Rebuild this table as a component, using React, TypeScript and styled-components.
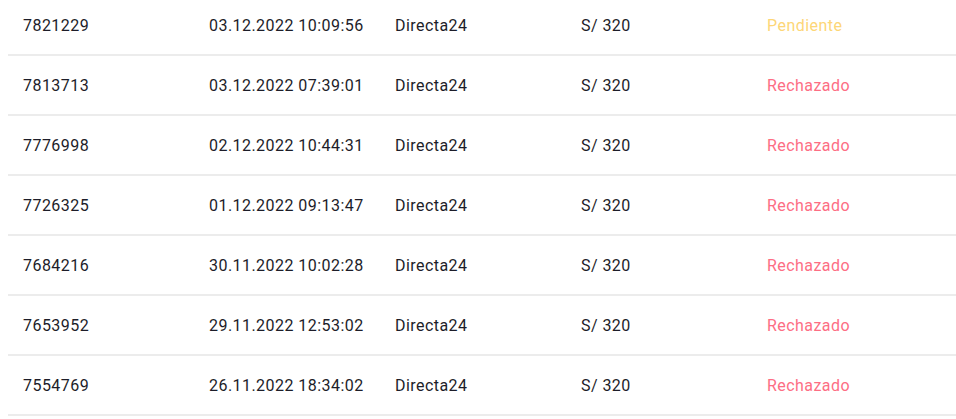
import React from 'react';
import styled, { createGlobalStyle } from 'styled-components';

type Status = 'Pendiente' | 'Rechazado';

const rows: { id: string; date: string; method: string; amount: string; status: Status }[] = [
  { id: '7821229', date: '03.12.2022 10:09:56', method: 'Directa24', amount: 'S/ 320', status: 'Pendiente' },
  { id: '7813713', date: '03.12.2022 07:39:01', method: 'Directa24', amount: 'S/ 320', status: 'Rechazado' },
  { id: '7776998', date: '02.12.2022 10:44:31', method: 'Directa24', amount: 'S/ 320', status: 'Rechazado' },
  { id: '7726325', date: '01.12.2022 09:13:47', method: 'Directa24', amount: 'S/ 320', status: 'Rechazado' },
  { id: '7684216', date: '30.11.2022 10:02:28', method: 'Directa24', amount: 'S/ 320', status: 'Rechazado' },
  { id: '7653952', date: '29.11.2022 12:53:02', method: 'Directa24', amount: 'S/ 320', status: 'Rechazado' },
  { id: '7554769', date: '26.11.2022 18:34:02', method: 'Directa24', amount: 'S/ 320', status: 'Rechazado' },
];

const statusColors: Record<Status, string> = {
  Pendiente: '#fdd677',
  Rechazado: '#fd6e84',
};

const GlobalStyle = createGlobalStyle`
  body {
    margin: 0 0 0 8px;
    background: #fff;
    font-family: Roboto, 'Liberation Sans', sans-serif;
    overflow: hidden;
  }
`;

const App: React.FC = () => {
  return (
    <>
      <GlobalStyle />
      <Table>
        {rows.map((row) => (
          <Row key={row.id}>
            <Cell>{row.id}</Cell>
            <Cell>{row.date}</Cell>
            <Cell>{row.method}</Cell>
            <Cell>{row.amount}</Cell>
            <Cell $color={statusColors[row.status]}>{row.status}</Cell>
          </Row>
        ))}
      </Table>
    </>
  );
};

const Table = styled.div`
  margin-top: -4px;
  display: flex;
  flex-direction: column;
`;

const Row = styled.div`
  display: grid;
  grid-template-columns: repeat(5, 186px);
  height: 58px;
  align-items: center;
  border-bottom: 2px solid #ececec;
`;

const Cell = styled.div<{ $color?: string }>`
  padding-left: 15px;
  font-size: 16px;
  color: ${(p) => p.$color || '#1d1d29'};
  white-space: nowrap;
  letter-spacing: 0.45px;
`;

export default App;
